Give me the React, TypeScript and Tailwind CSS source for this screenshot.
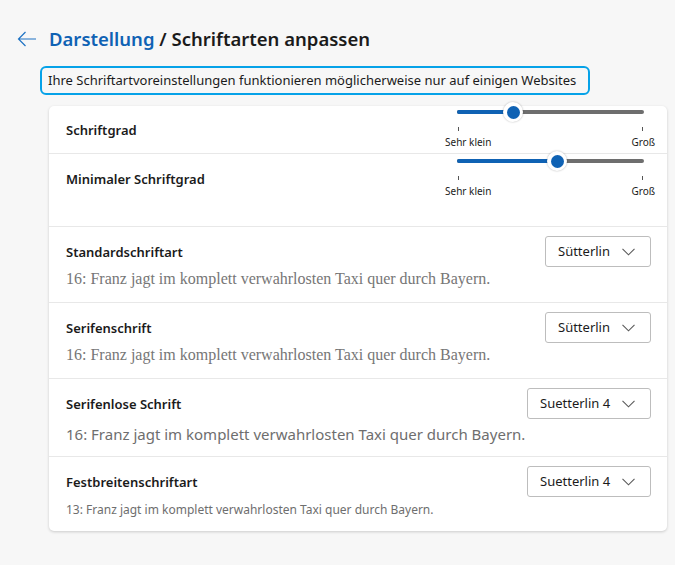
import React from "react";

const font = { fontFamily: '"Segoe UI", "Noto Sans", "Open Sans", sans-serif' };

function Slider({ pct }: { pct: number }) {
  const trackW = 187;
  const x = (trackW * pct) / 100;
  return (
    <div className="relative w-[210px] h-[48px]">
      <div className="absolute left-[12px] top-[4px] h-[4px] w-[187px] rounded-full bg-[#6e6e6e]" />
      <div className="absolute left-[12px] top-[4px] h-[4px] rounded-full bg-[#0f62b4]" style={{ width: x }} />
      <div
        className="absolute top-[-4px] w-[20px] h-[20px] rounded-full bg-white shadow-[0_0_2px_rgba(0,0,0,0.3)] flex items-center justify-center"
        style={{ left: 12 + x - 10 }}
      >
        <div className="w-[13px] h-[13px] rounded-full bg-[#0f62b4]" />
      </div>
      <div className="absolute left-[13px] top-[21px] w-px h-[4px] bg-[#555]" />
      <div className="absolute left-[197px] top-[21px] w-px h-[4px] bg-[#555]" />
      <div className="absolute left-0 top-[30px] text-[10px] leading-[13px] text-[#1b1b1b]">Sehr klein</div>
      <div className="absolute right-0 top-[30px] text-[10px] leading-[13px] text-[#1b1b1b]">Groß</div>
    </div>
  );
}

function Dropdown({ label, w }: { label: string; w: string }) {
  return (
    <div className={`${w} h-[31px] border border-[#bdbdbd] rounded-[3px] flex items-center justify-between pl-[12px] pr-[15px] bg-white`}>
      <span className="text-[13px] text-[#1b1b1b]">{label}</span>
      <svg width="13" height="8" viewBox="0 0 13 8" fill="none">
        <path d="M0.5 0.8L6.5 6.8L12.5 0.8" stroke="#5a5a5a" strokeWidth="1.1" />
      </svg>
    </div>
  );
}

function FontRow({
  title,
  sample,
  sampleClass,
  sampleStyle,
  dd,
  ddW,
  last,
  h,
}: {
  title: string;
  sample: string;
  sampleClass: string;
  sampleStyle?: React.CSSProperties;
  dd: string;
  ddW: string;
  last?: boolean;
  h: string;
}) {
  return (
    <div className={`${h} flex flex-col pl-[17px] pr-[16px] ${last ? "" : "border-b border-[#e8e8e8]"}`}>
      <div className="flex justify-between items-start pt-[9px]">
        <div className="pt-[6px] text-[13px] font-semibold text-[#1b1b1b] leading-[20px]">{title}</div>
        <Dropdown label={dd} w={ddW} />
      </div>
      <div className={sampleClass} style={sampleStyle}>
        {sample}
      </div>
    </div>
  );
}

const serif = { fontFamily: '"Liberation Serif", "Times New Roman", serif' };

export default function App() {
  return (
    <div className="w-[675px] h-[565px] bg-[#f7f7f7] overflow-hidden" style={font}>
      <div className="flex items-center pt-[24px] pl-[17px] h-[54px]">
        <svg width="20" height="16" viewBox="0 0 20 16" fill="none" className="mr-[12px]">
          <path d="M19 8H1.5M8.5 1L1.5 8L8.5 15" stroke="#1f73c4" strokeWidth="1.2" />
        </svg>
        <div className="text-[18.5px] font-semibold leading-[28px]">
          <span className="text-[#0f62b4]">Darstellung</span>
          <span className="text-[#1b1b1b]"> / Schriftarten anpassen</span>
        </div>
      </div>
      <div className="pl-[40px] pt-[12px]">
        <div className="inline-flex items-center h-[29px] w-[550px] border-[2.5px] border-[#06a2e8] rounded-[6px] pl-[6px] text-[13px] text-[#1b1b1b]">
          Ihre Schriftartvoreinstellungen funktionieren möglicherweise nur auf einigen Websites
        </div>
      </div>
      <div className="ml-[49px] mt-[11px] w-[618px] bg-white rounded-[5px] shadow-[0_1px_3px_rgba(0,0,0,0.18)]">
        <div className="h-[48px] flex justify-between pl-[17px] pr-[12px] border-b border-[#e8e8e8]">
          <div className="pt-[14px] text-[13px] font-semibold text-[#1b1b1b] leading-[20px]">Schriftgrad</div>
          <div className="pt-0">
            <Slider pct={30} />
          </div>
        </div>
        <div className="h-[73px] flex justify-between pl-[17px] pr-[12px] border-b border-[#e8e8e8]">
          <div className="pt-[15px] text-[13px] font-semibold text-[#1b1b1b] leading-[20px]">Minimaler Schriftgrad</div>
          <div className="pt-[1px]">
            <Slider pct={53.5} />
          </div>
        </div>
        <FontRow
          h="h-[76px]"
          title="Standardschriftart"
          sample="16: Franz jagt im komplett verwahrlosten Taxi quer durch Bayern."
          sampleClass="mt-[2px] text-[16px] leading-[20px] text-[#767676]"
          sampleStyle={serif}
          dd="Sütterlin"
          ddW="w-[106px]"
        />
        <FontRow
          h="h-[76px]"
          title="Serifenschrift"
          sample="16: Franz jagt im komplett verwahrlosten Taxi quer durch Bayern."
          sampleClass="mt-[2px] text-[16px] leading-[20px] text-[#767676]"
          sampleStyle={serif}
          dd="Sütterlin"
          ddW="w-[106px]"
        />
        <FontRow
          h="h-[78px]"
          title="Serifenlose Schrift"
          sample="16: Franz jagt im komplett verwahrlosten Taxi quer durch Bayern."
          sampleClass="mt-[4px] text-[15px] leading-[22px] text-[#6e6e6e]"
          dd="Suetterlin 4"
          ddW="w-[124px]"
        />
        <FontRow
          h="h-[74px]"
          last
          title="Festbreitenschriftart"
          sample="13: Franz jagt im komplett verwahrlosten Taxi quer durch Bayern."
          sampleClass="mt-[5px] text-[12px] leading-[16px] text-[#6e6e6e]"
          dd="Suetterlin 4"
          ddW="w-[124px]"
        />
      </div>
    </div>
  );
}
